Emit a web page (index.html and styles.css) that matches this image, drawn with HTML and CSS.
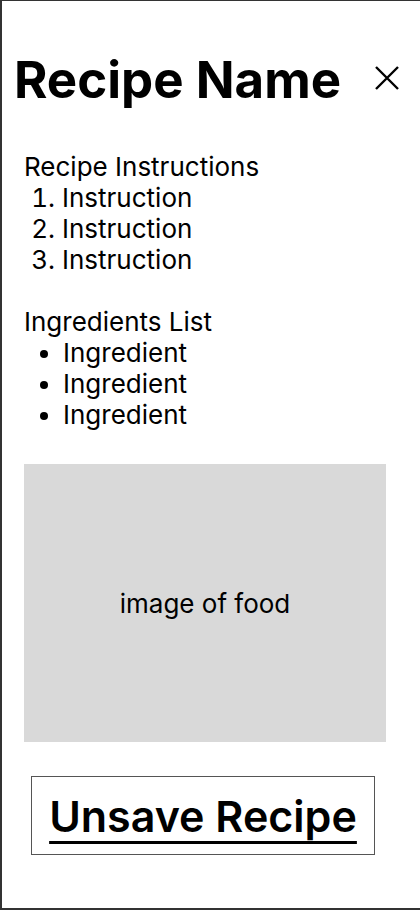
FILE: index.html
```html
<!DOCTYPE html>
<html lang="en">
<head>
  <meta charset="UTF-8" />
  <title>Recipe</title>
  <link rel="stylesheet" href="styles.css">
</head>
<body>
  <div class="frame">
    <header class="top">
      <h1>Recipe Name</h1>
      <button class="close-btn" aria-label="Close">
        <svg width="24" height="24" viewBox="0 0 24 24">
          <path d="M1 1 L23 23 M23 1 L1 23" stroke="#000" stroke-width="2.4" fill="none" />
        </svg>
      </button>
    </header>

    <main class="content">
      <p class="label">Recipe Instructions</p>
      <ol class="steps">
        <li>Instruction</li>
        <li>Instruction</li>
        <li>Instruction</li>
      </ol>

      <p class="label">Ingredients List</p>
      <ul class="ingredients">
        <li>Ingredient</li>
        <li>Ingredient</li>
        <li>Ingredient</li>
      </ul>

      <div class="food-img">image of food</div>

      <button class="unsave-btn">Unsave Recipe</button>
    </main>
  </div>
</body>
</html>
```

FILE: styles.css
```css
body {
  margin: 0;
  font-family: Inter, "Noto Sans", sans-serif;
  color: #000;
  background: #fff;
}
.frame {
  box-sizing: border-box;
  width: 420px;
  height: 910px;
  border-top: 1px solid #333;
  border-left: 2px solid #333;
  border-bottom: 2px solid #333;
}
.top {
  display: flex;
  align-items: center;
  padding: 49px 0 0 12px;
}
.top h1 {
  margin: 0;
  font-size: 51px;
  font-weight: 700;
  line-height: 60px;
}
.close-btn {
  background: none;
  border: none;
  padding: 0;
  margin: -4px 0 0 34px;
  width: 24px;
  height: 24px;
  cursor: pointer;
}
.close-btn svg {
  display: block;
}
.content {
  padding: 41px 0 0 22px;
  font-size: 26px;
  line-height: 31px;
}
.label {
  margin: 0;
}
.steps {
  margin: 0 0 31px;
  padding-left: 38px;
}
.ingredients {
  margin: 0;
  padding-left: 39px;
}
.food-img {
  width: 362px;
  height: 278px;
  margin-top: 34px;
  background: #d9d9d9;
  display: flex;
  align-items: center;
  justify-content: center;
}
.unsave-btn {
  display: block;
  box-sizing: border-box;
  width: 344px;
  height: 79px;
  margin: 34px 0 0 7px;
  background: #fff;
  border: 1px solid #555;
  font-family: Inter, "Noto Sans", sans-serif;
  font-size: 43px;
  font-weight: 600;
  color: #000;
  text-decoration: underline;
  text-decoration-thickness: 3px;
  text-underline-offset: 9px;
  cursor: pointer;
}
```
